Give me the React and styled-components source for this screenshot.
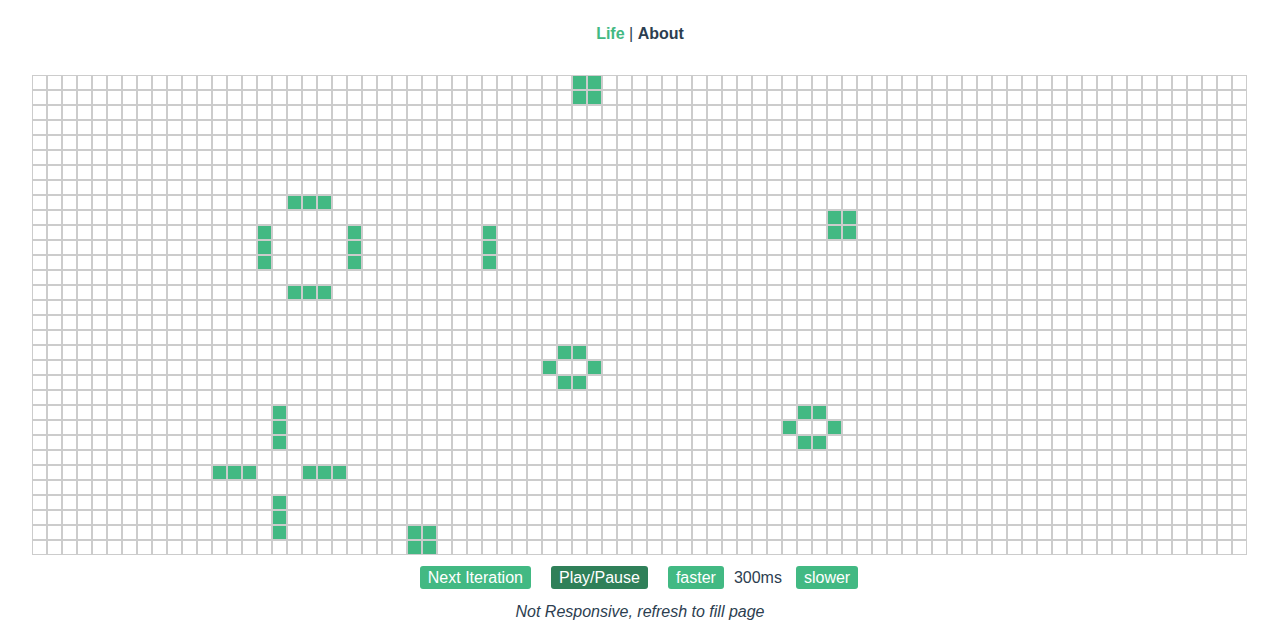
import React from 'react';
import styled, { createGlobalStyle } from 'styled-components';

const COLS = 81;
const ROWS = 32;

// live cells as [row, col]
const LIVE = [
  [0, 36], [0, 37], [1, 36], [1, 37],
  [8, 17], [8, 18], [8, 19],
  [10, 15], [11, 15], [12, 15],
  [10, 21], [11, 21], [12, 21],
  [14, 17], [14, 18], [14, 19],
  [10, 30], [11, 30], [12, 30],
  [9, 53], [9, 54], [10, 53], [10, 54],
  [18, 35], [18, 36], [19, 34], [19, 37], [20, 35], [20, 36],
  [22, 51], [22, 52], [23, 50], [23, 53], [24, 51], [24, 52],
  [22, 16], [23, 16], [24, 16],
  [26, 12], [26, 13], [26, 14], [26, 18], [26, 19], [26, 20],
  [28, 16], [29, 16], [30, 16],
  [30, 25], [30, 26], [31, 25], [31, 26],
];

const liveSet = new Set(LIVE.map(([r, c]) => `${r}-${c}`));

const GlobalStyle = createGlobalStyle`
  body {
    margin: 0;
    background: #fff;
  }
`;

const AppWrap = styled.div`
  font-family: "Liberation Sans", Arial, Helvetica, sans-serif;
  -webkit-font-smoothing: antialiased;
  text-align: center;
  color: #2c3e50;
`;

const Nav = styled.nav`
  padding-top: 25px;
  font-size: 16px;
  line-height: 18px;
`;

const NavLink = styled.a`
  font-weight: bold;
  color: ${({ active }) => (active ? '#42b983' : '#2c3e50')};
  text-decoration: none;
  cursor: pointer;
`;

const Board = styled.div`
  display: grid;
  grid-template-columns: repeat(${COLS}, 15px);
  grid-auto-rows: 15px;
  width: ${COLS * 15}px;
  margin-top: 32px;
  margin-left: calc(50% - ${Math.ceil((COLS * 15) / 2)}px);
`;

const Cell = styled.div`
  box-sizing: border-box;
  border: 1px solid #ccc;
  background: ${({ alive }) => (alive ? '#42b983' : '#fff')};
`;

const Controls = styled.div`
  margin-top: 11px;
  display: flex;
  justify-content: center;
  align-items: center;
  font-size: 16px;
  line-height: 19px;
  padding-right: 2px;
`;

const Button = styled.button`
  font-family: inherit;
  font-size: 16px;
  line-height: 19px;
  padding: 2px 8px;
  margin: 0 10px;
  border: none;
  border-radius: 3px;
  color: #fff;
  background: ${({ dark }) => (dark ? '#2f8059' : '#42b983')};
  cursor: pointer;
`;

const Speed = styled.span`
  margin-right: 4px;
`;

const Note = styled.p`
  margin: 14px 0 0;
  font-style: italic;
  font-size: 16px;
  line-height: 18px;
`;

export default function App() {
  const cells = [];
  for (let r = 0; r < ROWS; r++) {
    for (let c = 0; c < COLS; c++) {
      cells.push(<Cell key={`${r}-${c}`} alive={liveSet.has(`${r}-${c}`)} />);
    }
  }

  return (
    <AppWrap>
      <GlobalStyle />
      <Nav>
        <NavLink active>Life</NavLink> | <NavLink>About</NavLink>
      </Nav>
      <Board>{cells}</Board>
      <Controls>
        <Button>Next Iteration</Button>
        <Button dark>Play/Pause</Button>
        <Button>faster</Button>
        <Speed>300ms</Speed>
        <Button>slower</Button>
      </Controls>
      <Note>Not Responsive, refresh to fill page</Note>
    </AppWrap>
  );
}
